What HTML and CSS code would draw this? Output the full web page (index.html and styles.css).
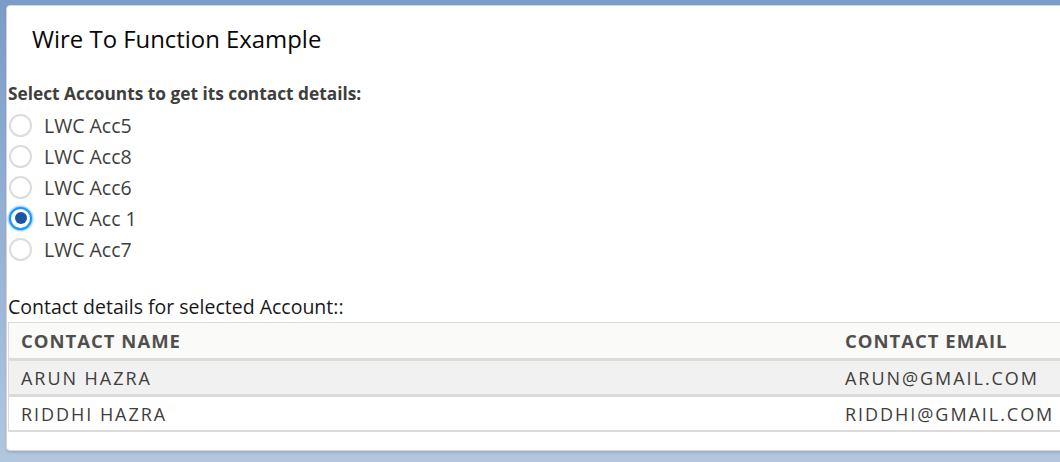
FILE: index.html
```html
<!DOCTYPE html>
<html>
<head>
<meta charset="utf-8">
<link rel="stylesheet" href="styles.css">
</head>
<body>
<div class="card">
  <div class="card-header">
    <h1 class="card-title">Wire To Function Example</h1>
  </div>
  <div class="card-body">
    <div class="group-label">Select Accounts to get its contact details:</div>
    <div class="radio-list">
      <label class="radio-row"><span class="radio"></span><span class="radio-text">LWC Acc5</span></label>
      <label class="radio-row"><span class="radio"></span><span class="radio-text">LWC Acc8</span></label>
      <label class="radio-row"><span class="radio"></span><span class="radio-text">LWC Acc6</span></label>
      <label class="radio-row"><span class="radio checked"></span><span class="radio-text">LWC Acc 1</span></label>
      <label class="radio-row"><span class="radio"></span><span class="radio-text">LWC Acc7</span></label>
    </div>
    <div class="section-label">Contact details for selected Account::</div>
    <table class="contacts">
      <thead>
        <tr><th class="col-name">Contact Name</th><th class="col-email">Contact Email</th></tr>
      </thead>
      <tbody>
        <tr class="row-alt"><td>Arun Hazra</td><td>arun@gmail.com</td></tr>
        <tr><td>Riddhi Hazra</td><td>riddhi@gmail.com</td></tr>
      </tbody>
    </table>
  </div>
</div>
</body>
</html>
```
FILE: styles.css
```css
html, body {
  margin: 0;
  padding: 0;
  height: 100%;
}
body {
  background: linear-gradient(180deg, #7a9cc8 0%, #96b1d4 50%, #b2c6e0 100%);
  font-family: "Open Sans", "Lato", sans-serif;
  color: #3e3e3c;
  overflow: hidden;
}
.card {
  margin: 5px 0 0 6px;
  width: 1100px;
  height: 446px;
  box-sizing: border-box;
  background: #fff;
  border: 1px solid #d4d4d4;
  border-radius: 4px;
  box-shadow: 0 2px 2px rgba(0,0,0,0.1);
}
.card-header {
  padding: 19px 0 0 25px;
  height: 77px;
  box-sizing: border-box;
}
.card-title {
  margin: 0;
  font-size: 23.9px;
  font-weight: 400;
  line-height: 28px;
  color: #080707;
}
.card-body {
  padding-left: 1px;
}
.group-label {
  font-size: 17.3px;
  font-weight: 700;
  color: #3e3e3c;
  line-height: 22px;
}
.radio-list {
  display: flex;
  flex-direction: column;
  padding-top: 5.6px;
}
.radio-row {
  display: flex;
  align-items: center;
  height: 30.8px;
}
.radio {
  width: 23px;
  height: 23px;
  box-sizing: border-box;
  border: 2px solid #dcdcdc;
  border-radius: 50%;
  background: #fff;
  margin: 0 12px 0 1px;
  display: flex;
  align-items: center;
  justify-content: center;
}
.radio.checked {
  border: 2px solid #1b96ff;
  box-shadow: 0 0 2px 1px rgba(27, 150, 255, 0.6);
}
.radio.checked::after {
  content: "";
  width: 12px;
  height: 12px;
  border-radius: 50%;
  background: #1c55a0;
}
.radio-text {
  font-size: 19.5px;
  color: #3e3e3c;
}
.section-label {
  margin-top: 30px;
  font-size: 19.5px;
  line-height: 24px;
  color: #181818;
}
.contacts {
  margin-top: 3.5px;
  width: 1090px;
  border-collapse: collapse;
  border-left: 1px solid #dddbda;
}
.contacts th {
  text-align: left;
  font-size: 18.5px;
  font-weight: 700;
  text-transform: uppercase;
  letter-spacing: 1px;
  color: #514f4d;
  background: #fafaf9;
  height: 35px;
  padding: 0 0 0 12px;
  border-top: 1px solid #dddbda;
  border-bottom: 3px solid #dddbda;
}
.contacts .col-name {
  width: 812px;
}
.contacts td {
  font-size: 18px;
  text-transform: uppercase;
  letter-spacing: 1.95px;
  color: #3e3e3c;
  height: 33px;
  padding: 0 0 0 12px;
  border-bottom: 3px solid #dddbda;
}
.contacts tr:last-child td {
  border-bottom: 2px solid #dddbda;
}
.contacts .row-alt td {
  background: #f1f1f1;
}
```
